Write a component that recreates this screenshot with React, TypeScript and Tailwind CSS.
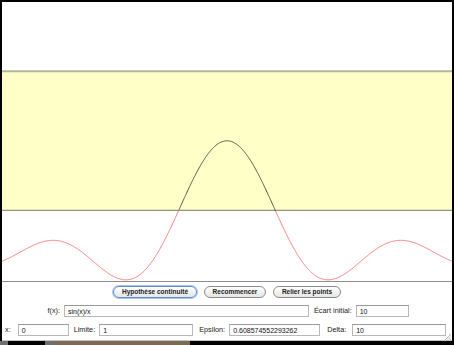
import React from 'react';

const W = 450;
const H = 279;
const CX = 225;
const SX = 22.5;
const Y0 = 253;
const SY = 114.2;
const L = 1;
const EPS = 0.608574552293262;

const f = (x: number) => (x === 0 ? 1 : Math.sin(x) / x);

function buildPaths() {
  const inside: string[] = [];
  const outside: string[] = [];
  let cur = '';
  let curIn: boolean | null = null;
  for (let px = 0; px <= W; px += 0.5) {
    const x = (px - CX) / SX;
    const v = f(x);
    const py = Y0 - v * SY;
    const isIn = Math.abs(v - L) < EPS;
    if (curIn === null || isIn !== curIn) {
      if (cur) (curIn ? inside : outside).push(cur + ` L${px.toFixed(2)},${py.toFixed(2)}`);
      cur = `M${px.toFixed(2)},${py.toFixed(2)}`;
      curIn = isIn;
    } else {
      cur += ` L${px.toFixed(2)},${py.toFixed(2)}`;
    }
  }
  if (cur) (curIn ? inside : outside).push(cur);
  return { inside: inside.join(' '), outside: outside.join(' ') };
}

const Btn: React.FC<{ label: string; w: string; focus?: boolean }> = ({ label, w, focus }) => (
  <button
    className={`${w} h-[12px] rounded-full text-[6.5px] font-bold leading-none text-[#222] bg-gradient-to-b from-white to-[#e6e6e6] ${
      focus ? 'border border-[#5b8fd0] shadow-[0_0_0_1px_#a9c6ea]' : 'border border-[#8c8c8c]'
    }`}
  >
    {label}
  </button>
);

const Field: React.FC<{ value: string; w: string }> = ({ value, w }) => (
  <div
    className={`${w} h-[12px] border border-[#b8b8b8] border-t-[#9a9a9a] bg-white pl-[3px] flex items-center text-[7px] text-[#111] leading-none`}
  >
    {value}
  </div>
);

const Label: React.FC<{ text: string; className?: string }> = ({ text, className }) => (
  <span className={`text-[7.3px] text-[#222] leading-none ${className ?? ''}`}>{text}</span>
);

export default function App() {
  const { inside, outside } = buildPaths();
  const top = Y0 - (L + EPS) * SY;
  const bottom = Y0 - (L - EPS) * SY;

  return (
    <div
      className="relative w-[454px] h-[345px] bg-black pt-[2px] px-[2px] flex flex-col overflow-hidden"
      style={{ fontFamily: '"Liberation Sans", Arial, sans-serif' }}
    >
      <svg width={W} height={H} className="block bg-white shrink-0">
        <rect x={0} y={top} width={W} height={bottom - top} fill="#ffffc8" />
        <line x1={0} x2={W} y1={top} y2={top} stroke="#b3b3a2" strokeWidth={2} />
        <line x1={0} x2={W} y1={bottom} y2={bottom} stroke="#76766a" strokeWidth={1} />
        <path d={outside} fill="none" stroke="#ff7a7a" strokeWidth={1} />
        <path d={inside} fill="none" stroke="#55554a" strokeWidth={1} />
      </svg>

      <div className="h-[60px] bg-white border-t border-[#8e8e8e] border-b border-b-[#c4c4c4] flex flex-col pt-[4px] shrink-0">
        <div className="flex justify-center gap-[7px]">
          <Btn label="Hypothèse continuité" w="w-[84px]" focus />
          <Btn label="Recommencer" w="w-[62px]" />
          <Btn label="Relier les points" w="w-[68px]" />
        </div>

        <div className="flex items-center mt-[7px] pl-[42px]">
          <Label text="f(x):" className="w-[16px] text-right mr-[4px]" />
          <Field value="sin(x)/x" w="w-[245px]" />
          <Label text="Écart initial:" className="ml-[5px] mr-[4px]" />
          <Field value="10" w="w-[53px]" />
        </div>

        <div className="flex items-center mt-[7px] pl-[3px]">
          <Label text="x:" className="mr-[7px]" />
          <Field value="0" w="w-[51px]" />
          <Label text="Limite:" className="ml-[5px] mr-[4px]" />
          <Field value="1" w="w-[94px]" />
          <Label text="Epsilon:" className="ml-[6px] mr-[4px]" />
          <Field value="0.608574552293262" w="w-[91px]" />
          <Label text="Delta:" className="ml-[7px] mr-[6px]" />
          <Field value="10" w="w-[94px]" />
        </div>
      </div>

      <div className="flex h-[4px] shrink-0 -mx-[2px]">
        <div className="w-[8px] bg-[#6f6f6f]" />
        <div className="w-[37px] bg-black" />
        <div className="w-[8px] bg-[#6f6f6f]" />
        <div className="w-[137px] bg-[#7d6a55]" />
        <div className="flex-1 bg-black" />
      </div>

      <svg width={7} height={7} className="absolute right-[3px] bottom-[5px]">
        <line x1={1} y1={7} x2={7} y2={1} stroke="#9a9a9a" strokeWidth={0.7} />
        <line x1={3.5} y1={7} x2={7} y2={3.5} stroke="#9a9a9a" strokeWidth={0.7} />
        <line x1={6} y1={7} x2={7} y2={6} stroke="#9a9a9a" strokeWidth={0.7} />
      </svg>
    </div>
  );
}
